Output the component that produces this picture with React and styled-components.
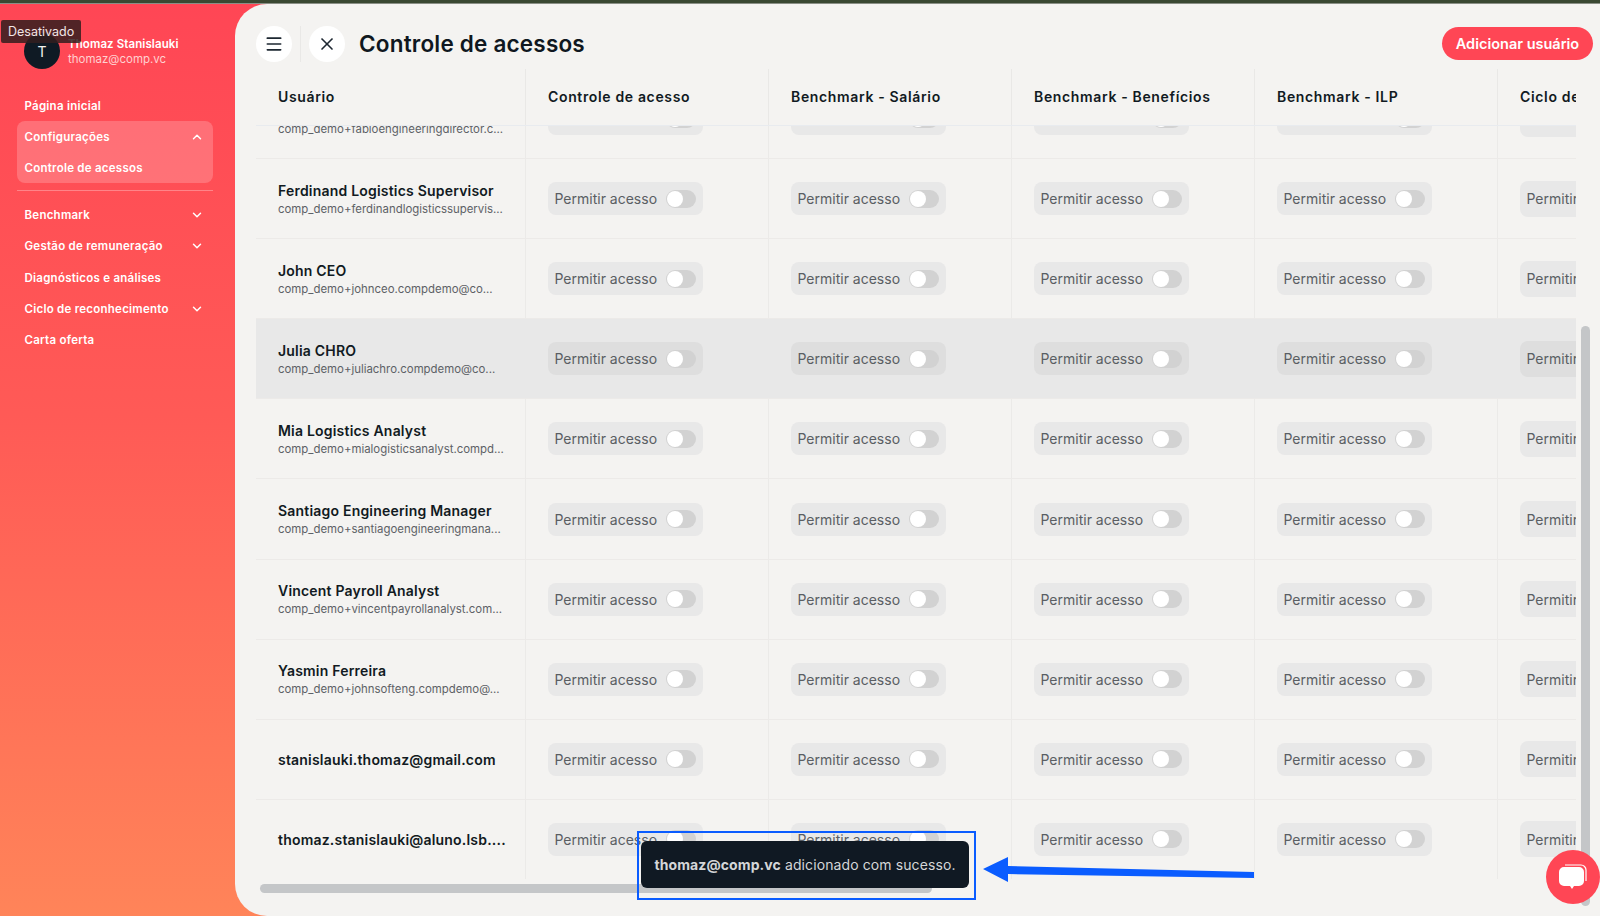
import React from "react";
import styled, { createGlobalStyle } from "styled-components";
import { ChevronDown, ChevronUp, Menu, X } from "lucide-react";

const GlobalStyle = createGlobalStyle`
  html, body {
    margin: 0;
    padding: 0;
    height: 916px;
    overflow: hidden;
    font-family: "Inter", "Liberation Sans", sans-serif;
    background: #f4f3f1;
  }
  * { box-sizing: border-box; }
`;

const Page = styled.div`
  position: relative;
  width: 1600px;
  height: 916px;
  overflow: hidden;
  display: flex;
  flex-direction: column;
`;

const TopStrip = styled.div`
  height: 4px;
  flex: none;
  background: #3a4832;
  border-bottom: 1px solid #8a8f86;
`;

const Shell = styled.div`
  flex: 1;
  display: flex;
  min-height: 0;
  background: linear-gradient(180deg, #ff4655 0%, #ff5a56 45%, #ff8459 100%);
`;

const Sidebar = styled.aside`
  width: 235px;
  flex: none;
  padding: 29px 22px 0 17px;
  color: #fff;
`;

const Profile = styled.div`
  display: flex;
  align-items: center;
  gap: 8px;
  padding-left: 7px;
  margin-bottom: 21px;
`;

const Avatar = styled.div`
  width: 36px;
  height: 36px;
  border-radius: 50%;
  background: #0f1a24;
  color: #f4f3f1;
  font-size: 14px;
  display: flex;
  align-items: center;
  justify-content: center;
`;

const ProfileText = styled.div`
  display: flex;
  flex-direction: column;
  gap: 1px;
  padding-top: 1px;
`;

const ProfileName = styled.span`
  font-size: 11.5px;
  font-weight: 600;
  line-height: 14px;
  letter-spacing: 0.1px;
`;

const ProfileMail = styled.span`
  font-size: 11.5px;
  line-height: 14px;
  color: #ffd0d0;
`;

const NavGroup = styled.div`
  background: rgba(255, 255, 255, 0.2);
  border-radius: 8px;
  margin: 0 0 7px;
  height: 62px;
`;

const NavItem = styled.div`
  height: 31.3px;
  padding: 0 9px 0 7.5px;
  display: flex;
  align-items: center;
  justify-content: space-between;
  font-size: 11.5px;
  font-weight: 600;
  letter-spacing: 0.25px;
  color: #fff;
  white-space: nowrap;
`;

const NavDivider = styled.div`
  height: 1px;
  background: rgba(255, 255, 255, 0.3);
  margin-bottom: 8px;
`;

const Tooltip = styled.div`
  position: absolute;
  left: 1px;
  top: 20px;
  height: 23px;
  padding: 0 7px;
  display: flex;
  align-items: center;
  background: rgba(50, 30, 30, 0.85);
  color: #f1e6e6;
  font-size: 12.5px;
  border-radius: 2px;
`;

const Main = styled.main`
  flex: 1;
  min-width: 0;
  position: relative;
  background: #f4f3f1;
  border-radius: 32px 0 0 32px;
  padding-left: 21px;
  display: flex;
  flex-direction: column;
`;

const Header = styled.header`
  height: 65px;
  flex: none;
  display: flex;
  align-items: center;
  padding: 15px 7px 0 0;
`;

const RoundButton = styled.button`
  width: 36px;
  height: 36px;
  border: none;
  border-radius: 50%;
  background: #fff;
  color: #1d2731;
  padding: 0;
  display: flex;
  align-items: center;
  justify-content: center;
`;

const HeaderDivider = styled.div`
  width: 1px;
  height: 36px;
  margin: 0 8px;
  background: #e9e8e6;
`;

const Title = styled.h1`
  flex: 1;
  margin: 0 0 1px 14px;
  font-size: 22.5px;
  font-weight: 600;
  letter-spacing: 0.2px;
  color: #0f1720;
`;

const AddButton = styled.button`
  width: 151px;
  height: 33px;
  margin-bottom: 1px;
  border: none;
  border-radius: 17px;
  background: #ff4655;
  color: #fff;
  font-family: inherit;
  font-size: 14.5px;
  font-weight: 600;
`;

const Table = styled.div`
  width: 1320px;
  flex: none;
  height: 810px;
  overflow: hidden;
  display: flex;
  flex-direction: column;
`;

const HeadRow = styled.div`
  display: grid;
  grid-template-columns: 270px repeat(5, 243px);
  height: 57px;
  flex: none;
  position: relative;
  z-index: 1;
  background: #f4f3f1;
  border-bottom: 1px solid #e8ebef;
`;

const HeadCell = styled.div`
  display: flex;
  align-items: center;
  padding: 0 0 1px 22px;
  border-right: 1px solid #e9e8e6;
  font-size: 14px;
  font-weight: 600;
  letter-spacing: 0.65px;
  color: #111a22;
  white-space: nowrap;
`;

const Rows = styled.div`
  flex: 1;
  min-height: 0;
  overflow: hidden;
`;

const Row = styled.div`
  display: grid;
  grid-template-columns: 270px repeat(5, 243px);
  height: 80.1px;
  border-bottom: 1px solid #eceae8;
  background: ${({ $active }) => ($active ? "#e8e8e8" : "transparent")};
  &:first-child {
    margin-top: -47px;
  }
`;

const Cell = styled.div`
  display: flex;
  align-items: center;
  padding-left: 21.5px;
  border-right: 1px solid ${({ $active }) => ($active ? "transparent" : "#ebeae8")};
  min-width: 0;
`;

const UserCell = styled(Cell)`
  flex-direction: column;
  align-items: flex-start;
  justify-content: center;
  padding-left: 22px;
  padding-top: 1px;
`;

const UserName = styled.div`
  font-size: 14px;
  font-weight: 600;
  line-height: 18px;
  letter-spacing: 0.2px;
  color: #111a22;
  white-space: nowrap;
`;

const UserMail = styled.div`
  margin-top: 2px;
  font-size: 11.4px;
  line-height: 15px;
  color: #5d6166;
  white-space: nowrap;
`;

const Chip = styled.div`
  width: 155px;
  height: ${({ $tall }) => ($tall ? "36px" : "33px")};
  padding: 0 7px;
  border-radius: 8px;
  background: ${({ $active }) => ($active ? "#dedede" : "#e8e8e8")};
  display: flex;
  align-items: center;
  justify-content: space-between;
  font-size: 14px;
  color: #5a5e63;
  white-space: nowrap;
`;

const Toggle = styled.span`
  width: 30px;
  height: 18px;
  border-radius: 9px;
  background: #d2d2d2;
  display: flex;
  align-items: center;
  padding-left: 1px;
  &::before {
    content: "";
    width: 16px;
    height: 16px;
    border-radius: 50%;
    background: #fff;
  }
`;

const HScrollTrack = styled.div`
  margin: 5px 0 0 4px;
  width: 672px;
  height: 9px;
  border-radius: 5px;
  background: #c4c6c8;
`;

const VScroll = styled.div`
  position: absolute;
  right: 10px;
  top: 322px;
  bottom: 10px;
  width: 9px;
  border-radius: 5px;
  background: #c4c6c8;
`;

const Toast = styled.div`
  position: absolute;
  left: 641px;
  top: 841px;
  width: 328px;
  height: 47px;
  border-radius: 6px;
  background: #101923;
  color: #d4d6d8;
  font-size: 14px;
  letter-spacing: 0.1px;
  display: flex;
  align-items: center;
  justify-content: center;
  white-space: nowrap;
  b {
    font-weight: 700;
    margin-right: 4px;
  }
`;

const Highlight = styled.div`
  position: absolute;
  left: 637px;
  top: 831px;
  width: 339px;
  height: 69px;
  border: 2px solid #0a5cff;
`;

const ArrowSvg = styled.svg`
  position: absolute;
  left: 980px;
  top: 850px;
`;

const ChatBubble = styled.div`
  position: absolute;
  left: 1546px;
  top: 850px;
  width: 54px;
  height: 54px;
  border-radius: 50%;
  background: #ff4655;
  display: flex;
  align-items: center;
  justify-content: center;
`;

const users = [
  { name: "Fabio Engineering Director", mail: "comp_demo+fabioengineeringdirector.c..." },
  { name: "Ferdinand Logistics Supervisor", mail: "comp_demo+ferdinandlogisticssupervis..." },
  { name: "John CEO", mail: "comp_demo+johnceo.compdemo@co..." },
  { name: "Julia CHRO", mail: "comp_demo+juliachro.compdemo@co...", active: true },
  { name: "Mia Logistics Analyst", mail: "comp_demo+mialogisticsanalyst.compd..." },
  { name: "Santiago Engineering Manager", mail: "comp_demo+santiagoengineeringmana..." },
  { name: "Vincent Payroll Analyst", mail: "comp_demo+vincentpayrollanalyst.com..." },
  { name: "Yasmin Ferreira", mail: "comp_demo+johnsofteng.compdemo@..." },
  { name: "stanislauki.thomaz@gmail.com" },
  { name: "thomaz.stanislauki@aluno.lsb...." },
];

const columns = [
  "Usuário",
  "Controle de acesso",
  "Benchmark - Salário",
  "Benchmark - Benefícios",
  "Benchmark - ILP",
  "Ciclo de reconhecimento",
];

const permissionColumns = [0, 1, 2, 3, 4];

const App = () => {
  return (
    <Page>
      <GlobalStyle />
      <TopStrip />
      <Shell>
        <Sidebar>
          <Profile>
            <Avatar>T</Avatar>
            <ProfileText>
              <ProfileName>Thomaz Stanislauki</ProfileName>
              <ProfileMail>thomaz@comp.vc</ProfileMail>
            </ProfileText>
          </Profile>
          <NavItem>Página inicial</NavItem>
          <NavGroup>
            <NavItem>
              Configurações <ChevronUp size={14} strokeWidth={2.5} />
            </NavItem>
            <NavItem>Controle de acessos</NavItem>
          </NavGroup>
          <NavDivider />
          <NavItem>
            Benchmark <ChevronDown size={14} strokeWidth={2.5} />
          </NavItem>
          <NavItem>
            Gestão de remuneração <ChevronDown size={14} strokeWidth={2.5} />
          </NavItem>
          <NavItem>Diagnósticos e análises</NavItem>
          <NavItem>
            Ciclo de reconhecimento <ChevronDown size={14} strokeWidth={2.5} />
          </NavItem>
          <NavItem>Carta oferta</NavItem>
        </Sidebar>
        <Main>
          <Header>
            <RoundButton>
              <Menu size={20} />
            </RoundButton>
            <HeaderDivider />
            <RoundButton>
              <X size={20} />
            </RoundButton>
            <Title>Controle de acessos</Title>
            <AddButton>Adicionar usuário</AddButton>
          </Header>
          <Table>
            <HeadRow>
              {columns.map((column) => (
                <HeadCell key={column}>{column}</HeadCell>
              ))}
            </HeadRow>
            <Rows>
              {users.map((user) => (
                <Row key={user.name} $active={user.active}>
                  <UserCell $active={user.active}>
                    <UserName>{user.name}</UserName>
                    {user.mail && <UserMail>{user.mail}</UserMail>}
                  </UserCell>
                  {permissionColumns.map((column) => (
                    <Cell key={column} $active={user.active}>
                      <Chip $tall={column === 4} $active={user.active}>
                        Permitir acesso
                        <Toggle />
                      </Chip>
                    </Cell>
                  ))}
                </Row>
              ))}
            </Rows>
          </Table>
          <HScrollTrack />
          <VScroll />
        </Main>
      </Shell>
      <Tooltip>Desativado</Tooltip>
      <Toast>
        <b>thomaz@comp.vc</b> adicionado com sucesso.
      </Toast>
      <Highlight />
      <ArrowSvg width="276" height="40" viewBox="0 0 276 40">
        <path d="M3 19 L28 7 L28 16 L274 22 L274 28 L28 24 L28 32 Z" fill="#0a5cff" />
      </ArrowSvg>
      <ChatBubble>
        <svg width="32" height="32" viewBox="0 0 32 32">
          <path d="M8 4 H24 a5 5 0 0 1 5 5 V20" fill="none" stroke="#fff" strokeWidth="1.2" />
          <path
            d="M7 6 H22 a5 5 0 0 1 5 5 V20 a5 5 0 0 1 -5 5 H17 L15 28 L13 25 H7 a5 5 0 0 1 -5 -5 V11 a5 5 0 0 1 5 -5 Z"
            fill="#fff"
          />
        </svg>
      </ChatBubble>
    </Page>
  );
};

export default App;
